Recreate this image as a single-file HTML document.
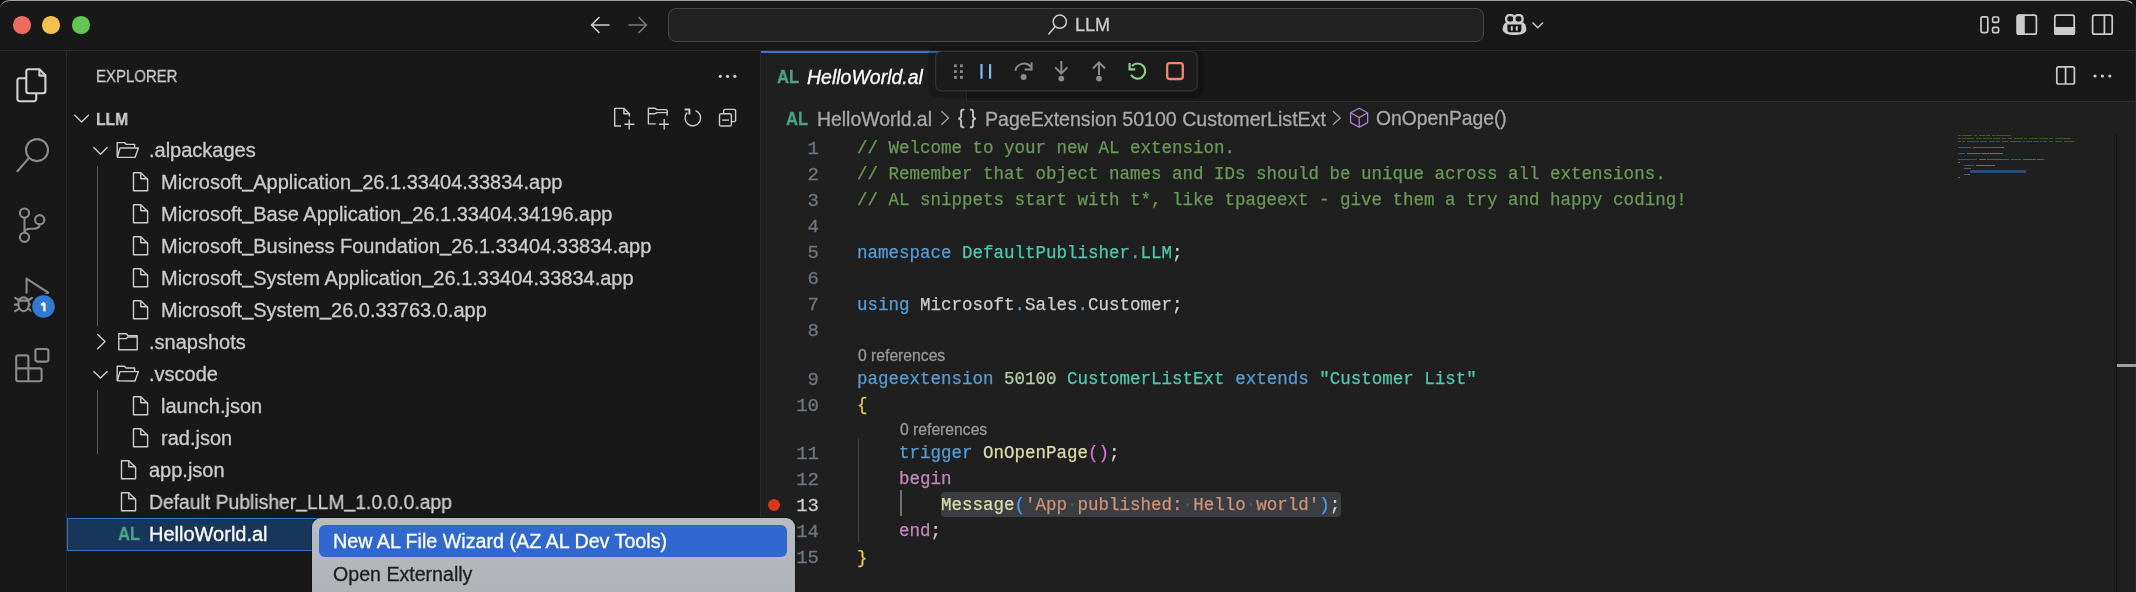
<!DOCTYPE html>
<html><head><meta charset="utf-8">
<style>
*{margin:0;padding:0;box-sizing:border-box}
html,body{width:2136px;height:592px;overflow:hidden;background:#0c0c0c}
body{font-family:"Liberation Sans",sans-serif;position:relative;-webkit-text-stroke-width:0.3px}
.a,.tr,.cl,.ln,.lens{will-change:transform}
.a{position:absolute;white-space:pre}
.ln{position:absolute;left:760px;width:59px;text-align:right;font-family:"Liberation Mono",monospace;font-size:19px;color:#6e7681;height:26px;line-height:26px}
.cl{-webkit-text-stroke-width:0.25px;position:absolute;left:857.45px;font-family:"Liberation Mono",monospace;font-size:17.5px;color:#cccccc;height:26px;line-height:26px;white-space:pre}
.cm{color:#6a9955}.kw{color:#569cd6}.ty{color:#4ec9b0}.nu{color:#b5cea8}.fn{color:#dcdcaa}.st{color:#ce9178}.ct{color:#c586c0}.b1{color:#f2c744}.b2{color:#da70d6}.b3{color:#4a9ff0}
.ws{color:#5a5a5a}
.us{position:relative;top:-2px}
.lens{position:absolute;font-size:15.7px;color:#999999;height:22px;line-height:22px;white-space:pre}
.tr{position:absolute;font-size:20px;color:#cccccc;height:32px;line-height:32px;white-space:pre}
svg.ov{position:absolute;left:0;top:0;width:2136px;height:592px;overflow:visible}
</style></head><body>
<div class="a" style="left:-1px;top:0;width:2137px;height:620px;background:#181818;border-radius:11px 11px 0 0;border-top:1.5px solid #a0a0a0;border-right:1px solid #2c2c2c;overflow:hidden"></div>
<div class="a" style="left:0;top:50px;width:2136px;height:1px;background:#2b2b2b"></div>
<div class="a" style="left:66px;top:51px;width:1px;height:541px;background:#2b2b2b"></div>
<div class="a" style="left:760px;top:51px;width:1px;height:541px;background:#2b2b2b"></div>
<div class="a" style="left:761px;top:51px;width:1375px;height:541px;background:#1f1f1f"></div>
<div class="a" style="left:966px;top:51px;width:1170px;height:51px;background:#181818;border-bottom:1px solid #2b2b2b;border-left:1px solid #2b2b2b"></div>
<div class="a" style="left:761px;top:51px;width:205px;height:1.6px;background:#2f76d0"></div>
<div class="a" style="left:2135px;top:10px;width:1px;height:582px;background:#2a2a2a"></div>
<div class="a" style="left:13px;top:15.5px;width:17.5px;height:17.5px;border-radius:50%;background:#ec6a5e"></div>
<div class="a" style="left:42px;top:15.5px;width:17.5px;height:17.5px;border-radius:50%;background:#f4bf4f"></div>
<div class="a" style="left:71.5px;top:15.5px;width:17.5px;height:17.5px;border-radius:50%;background:#61c554"></div>
<div class="a" style="left:668px;top:8px;width:816px;height:34px;border-radius:8px;background:#222222;border:1.5px solid #454545"></div>
<div class="a" style="left:1075px;top:14px;font-size:18px;line-height:22px;color:#cccccc">LLM</div>
<div class="a" style="left:941px;top:491.5px;width:400px;height:25px;border-radius:4px;background:#3a3d41"></div>
<div class="a" style="left:857.5px;top:438px;width:1px;height:104.4px;background:#404040"></div>
<div class="a" style="left:899.5px;top:490.2px;width:1.5px;height:26.1px;background:#707070"></div>
<div class="ln" style="top:135.5px;color:#6e7681">1</div>
<div class="cl" style="top:135.1px"><span class="cm">// Welcome to your new AL extension.</span></div>
<div class="ln" style="top:161.6px;color:#6e7681">2</div>
<div class="cl" style="top:161.2px"><span class="cm">// Remember that object names and IDs should be unique across all extensions.</span></div>
<div class="ln" style="top:187.7px;color:#6e7681">3</div>
<div class="cl" style="top:187.29999999999998px"><span class="cm">// AL snippets start with t*, like tpageext - give them a try and happy coding!</span></div>
<div class="ln" style="top:213.8px;color:#6e7681">4</div>
<div class="ln" style="top:239.9px;color:#6e7681">5</div>
<div class="cl" style="top:239.5px"><span class="kw">namespace</span> <span class="ty">DefaultPublisher</span><span class="kw">.</span><span class="ty">LLM</span>;</div>
<div class="ln" style="top:266.0px;color:#6e7681">6</div>
<div class="ln" style="top:292.1px;color:#6e7681">7</div>
<div class="cl" style="top:291.70000000000005px"><span class="kw">using</span> Microsoft<span class="kw">.</span>Sales<span class="kw">.</span>Customer;</div>
<div class="ln" style="top:318.2px;color:#6e7681">8</div>
<div class="ln" style="top:366.5px;color:#6e7681">9</div>
<div class="cl" style="top:366.1px"><span class="kw">pageextension</span> <span class="nu">50100</span> <span class="ty">CustomerListExt</span> <span class="kw">extends</span> <span class="ty">"Customer List"</span></div>
<div class="ln" style="top:392.6px;color:#6e7681">10</div>
<div class="cl" style="top:392.20000000000005px"><span class="b1">{</span></div>
<div class="ln" style="top:440.5px;color:#6e7681">11</div>
<div class="cl" style="top:440.1px">    <span class="kw">trigger</span> <span class="fn">OnOpenPage</span><span class="b2">()</span>;</div>
<div class="ln" style="top:466.6px;color:#6e7681">12</div>
<div class="cl" style="top:466.20000000000005px">    <span class="ct">begin</span></div>
<div class="ln" style="top:492.7px;color:#cccccc">13</div>
<div class="cl" style="top:492.3px">        <span class="fn">Message</span><span class="b3">(</span><span class="st">'App<span class="ws">·</span>published:<span class="ws">·</span>Hello<span class="ws">·</span>world'</span><span class="b3">)</span>;</div>
<div class="ln" style="top:518.8px;color:#6e7681">14</div>
<div class="cl" style="top:518.4px">    <span class="ct">end</span>;</div>
<div class="ln" style="top:544.9px;color:#6e7681">15</div>
<div class="cl" style="top:544.5px"><span class="b1">}</span></div>
<div class="lens" style="left:857.7px;top:344.5px">0 references</div>
<div class="lens" style="left:900px;top:418.5px">0 references</div>
<div class="a" style="left:767.8px;top:498.8px;width:12.4px;height:12.4px;border-radius:50%;background:#d9371f"></div>
<div class="a" style="left:96.3px;top:66px;font-size:17px;line-height:22px;color:#cccccc;transform:scaleX(0.88);transform-origin:0 0">EXPLORER</div>
<div class="a" style="left:96.3px;top:102.8px;font-size:17.4px;line-height:32px;color:#cccccc;font-weight:bold;transform:scaleX(0.9);transform-origin:0 0">LLM</div>
<div class="a" style="left:67px;top:517.5px;width:693px;height:32.5px;background:#16365a;border:1px solid #2f74c8"></div>
<div class="a" style="left:96.5px;top:166px;width:1px;height:160px;background:#585858"></div>
<div class="a" style="left:96.5px;top:390px;width:1px;height:64px;background:#585858"></div>
<div class="tr" style="left:149px;top:133.8px">.alpackages</div>
<div class="tr" style="left:160.5px;top:165.8px">Microsoft<span class="us">_</span>Application<span class="us">_</span>26.1.33404.33834.app</div>
<div class="tr" style="left:160.5px;top:197.8px">Microsoft<span class="us">_</span>Base Application<span class="us">_</span>26.1.33404.34196.app</div>
<div class="tr" style="left:160.5px;top:229.8px">Microsoft<span class="us">_</span>Business Foundation<span class="us">_</span>26.1.33404.33834.app</div>
<div class="tr" style="left:160.5px;top:261.8px">Microsoft<span class="us">_</span>System Application<span class="us">_</span>26.1.33404.33834.app</div>
<div class="tr" style="left:160.5px;top:293.8px">Microsoft<span class="us">_</span>System<span class="us">_</span>26.0.33763.0.app</div>
<div class="tr" style="left:149px;top:325.8px">.snapshots</div>
<div class="tr" style="left:149px;top:357.8px">.vscode</div>
<div class="tr" style="left:160.5px;top:389.8px">launch.json</div>
<div class="tr" style="left:160.5px;top:421.8px">rad.json</div>
<div class="tr" style="left:148.5px;top:453.8px">app.json</div>
<div class="tr" style="left:148.5px;top:485.8px;transform:scaleX(0.966);transform-origin:0 0">Default Publisher<span class="us">_</span>LLM<span class="us">_</span>1.0.0.0.app</div>
<div class="tr" style="left:148.5px;top:517.8px;color:#ffffff">HelloWorld.al</div>
<svg class="ov" width="2136" height="592" viewBox="0 0 2136 592"><g fill="none" stroke="#cccccc" stroke-width="1.6" stroke-linecap="round" stroke-linejoin="round"><path d="M591.5 25H609M599 17.5L591.5 25L599 32.5"/></g><g fill="none" stroke="#7a7a7a" stroke-width="1.6" stroke-linecap="round" stroke-linejoin="round"><path d="M629 25H646.5M639 17.5L646.5 25L639 32.5"/></g><g fill="none" stroke="#cccccc" stroke-width="1.5" stroke-linecap="round"><circle cx="1059.8" cy="21.7" r="6.6"/><path d="M1055 26.8L1048.8 33.9"/></g><g><path fill="#cccccc" d="M1505.6 22.5C1503.4 24.2 1502.7 26.8 1502.7 29.2C1502.7 33.2 1508 35.1 1514.5 35.1C1521 35.1 1526.3 33.2 1526.3 29.2C1526.3 26.8 1525.6 24.2 1523.4 22.5Z"/><path fill="#181818" d="M1507.4 24.6H1521.4V29.4a2.8 2.8 0 0 1 -2.8 2.8H1510.2a2.8 2.8 0 0 1 -2.8 -2.8z"/><rect x="1506.15" y="15.15" width="8.2" height="7.6" rx="3.2" fill="#181818" stroke="#cccccc" stroke-width="2.3"/><rect x="1514.35" y="15.15" width="8.2" height="7.6" rx="3.2" fill="#181818" stroke="#cccccc" stroke-width="2.3"/><rect x="1510.8" y="26" width="2" height="4.7" rx="1" fill="#cccccc"/><rect x="1515.8" y="26" width="2" height="4.7" rx="1" fill="#cccccc"/></g><path d="M1532.5 22.5L1537.8 27.8L1543 22.5" fill="none" stroke="#cccccc" stroke-width="1.4"/><g fill="none" stroke="#cccccc" stroke-width="1.7"><rect x="1981" y="16.8" width="6.8" height="15.8" rx="1.6"/><rect x="1992.6" y="17" width="6" height="5.4" rx="1.4"/><rect x="1992.6" y="27.3" width="6" height="5.4" rx="1.4"/><rect x="2017.4" y="15.2" width="19" height="19" rx="2"/><rect x="2054.8" y="15.2" width="19.4" height="19" rx="2"/><rect x="2092.6" y="15.2" width="19.6" height="19" rx="2"/><path d="M2104.4 15.2V34.2"/></g><path fill="#cccccc" d="M2019 14.4h5.8v20.6h-5.8a2.6 2.6 0 0 1 -2.6 -2.6v-15.4a2.6 2.6 0 0 1 2.6 -2.6z"/><path fill="#cccccc" d="M2054 27h21.2v5.4a2.6 2.6 0 0 1 -2.6 2.6h-16a2.6 2.6 0 0 1 -2.6 -2.6z"/><g fill="none" stroke="#cccccc" stroke-width="1.7"><rect x="2056.8" y="66.8" width="17.6" height="17.2" rx="1.8"/><path d="M2065.6 66.8V84"/></g><g fill="#cccccc"><circle cx="2095" cy="76" r="1.6"/><circle cx="2102.4" cy="76" r="1.6"/><circle cx="2109.8" cy="76" r="1.6"/></g><g fill="#cccccc"><circle cx="720.3" cy="76.3" r="1.6"/><circle cx="727.5" cy="76.3" r="1.6"/><circle cx="734.9" cy="76.3" r="1.6"/></g><g fill="none" stroke="#d2d2d2" stroke-width="2.1" stroke-linejoin="round"><path d="M26.3 91V71.5a2.2 2.2 0 0 1 2.2-2.2H39.4L45.4 75.3V91a2.2 2.2 0 0 1 -2.2 2.2H28.5a2.2 2.2 0 0 1 -2.2 -2.2z"/><path d="M39.4 69.3V75.6H45.4"/><path d="M26.3 78.3H19.6a2.2 2.2 0 0 0 -2.2 2.2V99a2.2 2.2 0 0 0 2.2 2.2H34a2.2 2.2 0 0 0 2.2 -2.2V93.2"/></g><g fill="none" stroke="#8b8b8b" stroke-width="2.1" stroke-linecap="round"><circle cx="37" cy="150.1" r="11"/><path d="M28.6 158.4L17.4 171.2"/></g><g fill="none" stroke="#8b8b8b" stroke-width="2.1"><circle cx="24.5" cy="213.1" r="4.6"/><circle cx="24.5" cy="237.3" r="4.6"/><circle cx="39.7" cy="219.7" r="4.6"/><path d="M24.5 217.7V232.7"/><path d="M39.7 224.3C39.7 228 37 228.8 33 228.8H30.5C27 228.8 24.5 230 24.5 233"/></g><g fill="none" stroke="#8b8b8b" stroke-width="2.1" stroke-linejoin="round" stroke-linecap="round"><path d="M26.6 292.8V278.6L48.2 292.6L43 296"/><ellipse cx="23.6" cy="304.2" rx="5.3" ry="7"/><path d="M18.5 300.6H28.7M14.8 304.6H18.3M28.9 304.6H32.4M15.2 297.8L18.6 300M32 297.8L28.6 300M15.2 311.2L18.8 308.8M32 311.2L28.4 308.8"/></g><circle cx="43.5" cy="306.5" r="13" fill="#181818"/><circle cx="43.5" cy="306.5" r="11.3" fill="#2f7bd4"/><path d="M44.4 302.8V311.2M41.2 305L44.4 302.8" fill="none" stroke="#ffffff" stroke-width="2.3" stroke-linejoin="round"/><g fill="none" stroke="#8b8b8b" stroke-width="2.1" stroke-linejoin="round"><path d="M18.2 355.4H26.4a2 2 0 0 1 2 2V368.4H39.6a2 2 0 0 1 2 2V379.2a2 2 0 0 1 -2 2H18.2a2 2 0 0 1 -2 -2V357.4a2 2 0 0 1 2 -2z"/><path d="M16.2 368.4H28.4V381.2"/><rect x="35.4" y="349" width="13" height="12.6" rx="2"/></g><g fill="none" stroke="#cccccc" stroke-width="1.4" stroke-linejoin="round"><path d="M621 126H614.7V108.4H624L629.4 113.8V116.5"/><path d="M623.9 108.4V113.8H629.4"/><path d="M624.4 124.3H634.4M629.2 119.5V129.4"/><path d="M655.8 123.9H648.4V108.2H655L657 109.6H666a1.2 1.2 0 0 1 1.2 1.2V115.8"/><path d="M648.4 113.7H655L657 112.6H667.2"/><path d="M659.1 124.3H669M664.2 119.1V129.6"/><path d="M695.4 110.6A7.8 7.8 0 1 1 687.2 112.6"/><path d="M684.6 109.6H689.4V114.4" stroke-width="2"/><rect x="719.5" y="113.8" width="11.9" height="12.2" rx="1.6"/><path d="M723.6 113.8V111a1.6 1.6 0 0 1 1.6 -1.6H734a1.6 1.6 0 0 1 1.6 1.6V120a1.6 1.6 0 0 1 -1.6 1.6H731.4"/><path d="M722.2 120.1H729"/></g><g fill="none" stroke="#cccccc" stroke-width="1.4" stroke-linecap="round" stroke-linejoin="round"><path d="M74.8 115.2L81.6 122L88.4 115.2"/><path d="M93.8 147.6L100.5 154.3L107.2 147.6"/><path d="M97.6 334.4L105 341.6L97.6 348.8"/><path d="M93.8 371.4L100.5 378.1L107.2 371.4"/></g><g fill="none" stroke="#cccccc" stroke-width="1.4" stroke-linejoin="round"><path d="M117.2 156.8V142.6H124.4L126.2 144.4H134.6V147.6"/><path d="M117.4 157.2L120 148.0H138.4L135 157.4Z"/><path d="M117.2 380.4V366.2H124.4L126.2 368.0H134.6V371.2"/><path d="M117.4 380.79999999999995L120 371.6H138.4L135 381.0Z"/><path d="M133.5 172.7H140.8L147.60000000000002 179.5V190.8H133.5Z"/><path d="M140.8 172.7V178.8H147.60000000000002"/><path d="M133.5 204.7H140.8L147.60000000000002 211.5V222.8H133.5Z"/><path d="M140.8 204.7V210.8H147.60000000000002"/><path d="M133.5 236.7H140.8L147.60000000000002 243.5V254.8H133.5Z"/><path d="M140.8 236.7V242.8H147.60000000000002"/><path d="M133.5 268.7H140.8L147.60000000000002 275.5V286.8H133.5Z"/><path d="M140.8 268.7V274.8H147.60000000000002"/><path d="M133.5 300.7H140.8L147.60000000000002 307.5V318.8H133.5Z"/><path d="M140.8 300.7V306.8H147.60000000000002"/><path d="M133.5 396.7H140.8L147.60000000000002 403.5V414.8H133.5Z"/><path d="M140.8 396.7V402.8H147.60000000000002"/><path d="M133.5 428.7H140.8L147.60000000000002 435.5V446.8H133.5Z"/><path d="M140.8 428.7V434.8H147.60000000000002"/><path d="M121.5 460.7H128.8L135.6 467.5V478.8H121.5Z"/><path d="M128.8 460.7V466.8H135.6"/><path d="M121.5 492.7H128.8L135.6 499.5V510.8H121.5Z"/><path d="M128.8 492.7V498.8H135.6"/><path d="M118.8 333.8H126.2L128 335.8H137.2V349.8H118.8Z"/><path d="M118.8 338.6H126.2L128 337H137.2"/></g><rect x="928" y="46" width="276" height="52" rx="10" fill="#000" opacity="0.18"/><rect x="935.6" y="51.5" width="261.6" height="39.4" rx="6" fill="#1b1b1b" stroke="#333333" stroke-width="1.2"/><g fill="#8b8b8b"><rect x="954" y="64.4" width="2.8" height="2.8"/><rect x="960" y="64.4" width="2.8" height="2.8"/><rect x="954" y="70.2" width="2.8" height="2.8"/><rect x="960" y="70.2" width="2.8" height="2.8"/><rect x="954" y="76" width="2.8" height="2.8"/><rect x="960" y="76" width="2.8" height="2.8"/></g><g fill="#75beff"><rect x="980.4" y="64" width="2.2" height="14.8" rx="0.6"/><rect x="989" y="64" width="2.2" height="14.8" rx="0.6"/></g><g fill="none" stroke="#8b8b8b" stroke-width="2" stroke-linejoin="miter"><path d="M1015.3 70.8A9 9 0 0 1 1031 66.8"/><path d="M1031.6 62.2V69.6H1024.6"/><path d="M1061.3 61V73.5M1055.2 67.4L1061.3 73.5L1067.4 67.4"/><path d="M1099 75V62.4M1092.9 68.5L1099 62.4L1105.1 68.5"/></g><g fill="#8b8b8b"><circle cx="1023.6" cy="77" r="3"/><circle cx="1061.3" cy="78.6" r="2.9"/><circle cx="1099" cy="78.6" r="2.9"/></g><g fill="none" stroke="#89d185" stroke-width="2.2"><path d="M1131 74.8A7.6 7.6 0 1 0 1132 66"/><path d="M1129.6 63V69.3H1135.2"/></g><rect x="1167.2" y="63.2" width="15.6" height="15.8" rx="2.4" fill="none" stroke="#f0876f" stroke-width="2.3"/><g fill="none" stroke="#b180d7" stroke-width="1.3" stroke-linejoin="round"><path d="M1359.2 108.2L1367.6 112.8V122.6L1359.2 127.2L1350.6 122.6V112.8Z"/><path d="M1350.6 112.8L1359.2 117.6L1367.6 112.8M1359.2 117.6V127.2"/></g><g fill="none" stroke="#a0a0a0" stroke-width="1.3"><path d="M941.4 111.2L948.6 118L941.4 124.8"/><path d="M1333 111.2L1340.2 118L1333 124.8"/></g></svg>
<div class="a" style="left:777px;top:64px;font-size:18px;line-height:26px;color:#4fa48a;font-weight:bold;transform:scaleX(0.92);transform-origin:0 0">AL</div>
<div class="a" style="left:807px;top:63.5px;font-size:19.5px;line-height:26px;color:#ffffff;font-style:italic">HelloWorld.al</div>
<div class="a" style="left:785.5px;top:106px;font-size:18px;line-height:26px;color:#4fa48a;font-weight:bold;transform:scaleX(0.92);transform-origin:0 0">AL</div>
<div class="a" style="left:817px;top:106px;font-size:19.4px;line-height:26px;color:#a9a9a9">HelloWorld.al</div>
<div class="a" style="left:958px;top:105px;font-size:19.3px;line-height:26px;color:#c8c8c8">{ }</div>
<div class="a" style="left:984.5px;top:106px;font-size:19.6px;line-height:26px;color:#a9a9a9">PageExtension 50100 CustomerListExt</div>
<div class="a" style="left:1375.5px;top:106px;font-size:19.3px;line-height:26px;color:#a9a9a9">OnOpenPage()</div>
<div class="a" style="left:118px;top:521px;font-size:18px;line-height:26px;color:#4fa48a;font-weight:bold;transform:scaleX(0.92);transform-origin:0 0">AL</div>
<div class="a" style="left:1958.0px;top:134.5px;width:2.9px;height:1.4px;background:#6a9955;opacity:0.45"></div>
<div class="a" style="left:1962.4px;top:134.5px;width:10.3px;height:1.4px;background:#6a9955;opacity:0.45"></div>
<div class="a" style="left:1974.2px;top:134.5px;width:2.9px;height:1.4px;background:#6a9955;opacity:0.45"></div>
<div class="a" style="left:1978.6px;top:134.5px;width:5.9px;height:1.4px;background:#6a9955;opacity:0.45"></div>
<div class="a" style="left:1985.9px;top:134.5px;width:4.4px;height:1.4px;background:#6a9955;opacity:0.45"></div>
<div class="a" style="left:1991.8px;top:134.5px;width:2.9px;height:1.4px;background:#6a9955;opacity:0.45"></div>
<div class="a" style="left:1996.2px;top:134.5px;width:14.7px;height:1.4px;background:#6a9955;opacity:0.45"></div>
<div class="a" style="left:1958.0px;top:137.5px;width:2.9px;height:1.4px;background:#6a9955;opacity:0.45"></div>
<div class="a" style="left:1962.4px;top:137.5px;width:11.8px;height:1.4px;background:#6a9955;opacity:0.45"></div>
<div class="a" style="left:1975.6px;top:137.5px;width:5.9px;height:1.4px;background:#6a9955;opacity:0.45"></div>
<div class="a" style="left:1983.0px;top:137.5px;width:8.8px;height:1.4px;background:#6a9955;opacity:0.45"></div>
<div class="a" style="left:1993.3px;top:137.5px;width:7.3px;height:1.4px;background:#6a9955;opacity:0.45"></div>
<div class="a" style="left:2002.1px;top:137.5px;width:4.4px;height:1.4px;background:#6a9955;opacity:0.45"></div>
<div class="a" style="left:2008.0px;top:137.5px;width:4.4px;height:1.4px;background:#6a9955;opacity:0.45"></div>
<div class="a" style="left:2013.9px;top:137.5px;width:8.8px;height:1.4px;background:#6a9955;opacity:0.45"></div>
<div class="a" style="left:2024.2px;top:137.5px;width:2.9px;height:1.4px;background:#6a9955;opacity:0.45"></div>
<div class="a" style="left:2028.6px;top:137.5px;width:8.8px;height:1.4px;background:#6a9955;opacity:0.45"></div>
<div class="a" style="left:2038.8px;top:137.5px;width:8.8px;height:1.4px;background:#6a9955;opacity:0.45"></div>
<div class="a" style="left:2049.1px;top:137.5px;width:4.4px;height:1.4px;background:#6a9955;opacity:0.45"></div>
<div class="a" style="left:2055.0px;top:137.5px;width:16.2px;height:1.4px;background:#6a9955;opacity:0.45"></div>
<div class="a" style="left:1958.0px;top:140.5px;width:2.9px;height:1.4px;background:#6a9955;opacity:0.45"></div>
<div class="a" style="left:1962.4px;top:140.5px;width:2.9px;height:1.4px;background:#6a9955;opacity:0.45"></div>
<div class="a" style="left:1966.8px;top:140.5px;width:11.8px;height:1.4px;background:#6a9955;opacity:0.45"></div>
<div class="a" style="left:1980.0px;top:140.5px;width:7.3px;height:1.4px;background:#6a9955;opacity:0.45"></div>
<div class="a" style="left:1988.9px;top:140.5px;width:5.9px;height:1.4px;background:#6a9955;opacity:0.45"></div>
<div class="a" style="left:1996.2px;top:140.5px;width:4.4px;height:1.4px;background:#6a9955;opacity:0.45"></div>
<div class="a" style="left:2002.1px;top:140.5px;width:5.9px;height:1.4px;background:#6a9955;opacity:0.45"></div>
<div class="a" style="left:2009.5px;top:140.5px;width:11.8px;height:1.4px;background:#6a9955;opacity:0.45"></div>
<div class="a" style="left:2022.7px;top:140.5px;width:1.5px;height:1.4px;background:#6a9955;opacity:0.45"></div>
<div class="a" style="left:2025.6px;top:140.5px;width:5.9px;height:1.4px;background:#6a9955;opacity:0.45"></div>
<div class="a" style="left:2033.0px;top:140.5px;width:5.9px;height:1.4px;background:#6a9955;opacity:0.45"></div>
<div class="a" style="left:2040.3px;top:140.5px;width:1.5px;height:1.4px;background:#6a9955;opacity:0.45"></div>
<div class="a" style="left:2043.3px;top:140.5px;width:4.4px;height:1.4px;background:#6a9955;opacity:0.45"></div>
<div class="a" style="left:2049.1px;top:140.5px;width:4.4px;height:1.4px;background:#6a9955;opacity:0.45"></div>
<div class="a" style="left:2055.0px;top:140.5px;width:7.3px;height:1.4px;background:#6a9955;opacity:0.45"></div>
<div class="a" style="left:2063.8px;top:140.5px;width:10.3px;height:1.4px;background:#6a9955;opacity:0.45"></div>
<div class="a" style="left:1958.0px;top:146.5px;width:13.2px;height:1.4px;background:#569cd6;opacity:0.45"></div>
<div class="a" style="left:1972.7px;top:146.5px;width:23.5px;height:1.4px;background:#4ec9b0;opacity:0.45"></div>
<div class="a" style="left:1996.2px;top:146.5px;width:1.5px;height:1.4px;background:#569cd6;opacity:0.45"></div>
<div class="a" style="left:1997.7px;top:146.5px;width:4.4px;height:1.4px;background:#4ec9b0;opacity:0.45"></div>
<div class="a" style="left:2002.1px;top:146.5px;width:1.5px;height:1.4px;background:#cccccc;opacity:0.45"></div>
<div class="a" style="left:1958.0px;top:152.5px;width:7.3px;height:1.4px;background:#569cd6;opacity:0.45"></div>
<div class="a" style="left:1966.8px;top:152.5px;width:13.2px;height:1.4px;background:#cccccc;opacity:0.45"></div>
<div class="a" style="left:1980.0px;top:152.5px;width:1.5px;height:1.4px;background:#569cd6;opacity:0.45"></div>
<div class="a" style="left:1981.5px;top:152.5px;width:7.3px;height:1.4px;background:#cccccc;opacity:0.45"></div>
<div class="a" style="left:1988.9px;top:152.5px;width:1.5px;height:1.4px;background:#569cd6;opacity:0.45"></div>
<div class="a" style="left:1990.3px;top:152.5px;width:13.2px;height:1.4px;background:#cccccc;opacity:0.45"></div>
<div class="a" style="left:1958.0px;top:158.5px;width:19.1px;height:1.4px;background:#569cd6;opacity:0.45"></div>
<div class="a" style="left:1978.6px;top:158.5px;width:7.3px;height:1.4px;background:#b5cea8;opacity:0.45"></div>
<div class="a" style="left:1987.4px;top:158.5px;width:22.1px;height:1.4px;background:#4ec9b0;opacity:0.45"></div>
<div class="a" style="left:2010.9px;top:158.5px;width:10.3px;height:1.4px;background:#569cd6;opacity:0.45"></div>
<div class="a" style="left:2022.7px;top:158.5px;width:13.2px;height:1.4px;background:#4ec9b0;opacity:0.45"></div>
<div class="a" style="left:2037.4px;top:158.5px;width:7.3px;height:1.4px;background:#4ec9b0;opacity:0.45"></div>
<div class="a" style="left:1958.0px;top:161.5px;width:1.5px;height:1.4px;background:#ffd700;opacity:0.45"></div>
<div class="a" style="left:1963.9px;top:164.5px;width:10.3px;height:1.4px;background:#569cd6;opacity:0.45"></div>
<div class="a" style="left:1975.6px;top:164.5px;width:14.7px;height:1.4px;background:#dcdcaa;opacity:0.45"></div>
<div class="a" style="left:1990.3px;top:164.5px;width:2.9px;height:1.4px;background:#da70d6;opacity:0.45"></div>
<div class="a" style="left:1993.3px;top:164.5px;width:1.5px;height:1.4px;background:#cccccc;opacity:0.45"></div>
<div class="a" style="left:1963.9px;top:167.5px;width:7.3px;height:1.4px;background:#c586c0;opacity:0.45"></div>
<div class="a" style="left:1969.8px;top:170.5px;width:10.3px;height:1.4px;background:#dcdcaa;opacity:0.45"></div>
<div class="a" style="left:1980.0px;top:170.5px;width:1.5px;height:1.4px;background:#179fff;opacity:0.45"></div>
<div class="a" style="left:1981.5px;top:170.5px;width:5.9px;height:1.4px;background:#ce9178;opacity:0.45"></div>
<div class="a" style="left:1988.9px;top:170.5px;width:14.7px;height:1.4px;background:#ce9178;opacity:0.45"></div>
<div class="a" style="left:2005.0px;top:170.5px;width:7.3px;height:1.4px;background:#ce9178;opacity:0.45"></div>
<div class="a" style="left:2013.9px;top:170.5px;width:8.8px;height:1.4px;background:#ce9178;opacity:0.45"></div>
<div class="a" style="left:2022.7px;top:170.5px;width:1.5px;height:1.4px;background:#179fff;opacity:0.45"></div>
<div class="a" style="left:2024.2px;top:170.5px;width:1.5px;height:1.4px;background:#cccccc;opacity:0.45"></div>
<div class="a" style="left:1963.9px;top:173.5px;width:4.4px;height:1.4px;background:#c586c0;opacity:0.45"></div>
<div class="a" style="left:1968.3px;top:173.5px;width:1.5px;height:1.4px;background:#cccccc;opacity:0.45"></div>
<div class="a" style="left:1958.0px;top:176.5px;width:1.5px;height:1.4px;background:#ffd700;opacity:0.45"></div>
<div class="a" style="left:1969.6px;top:170px;width:56px;height:3px;background:#264f78;opacity:0.9"></div>
<div class="a" style="left:2115.5px;top:134px;width:1px;height:458px;background:#111111"></div>
<div class="a" style="left:2116.5px;top:364px;width:20px;height:3px;background:#a0a0a0"></div>
<div class="a" style="left:311.5px;top:518px;width:483px;height:90px;border-radius:9px;background:linear-gradient(#b8bbbf,#aeb1b5);box-shadow:0 0 0 0.5px rgba(0,0,0,0.5)"></div>
<div class="a" style="left:318.6px;top:525px;width:468.4px;height:31.6px;border-radius:6px;background:#3068cf"></div>
<div class="a" style="left:332.5px;top:528.3px;font-size:19.7px;line-height:26px;color:#ffffff">New AL File Wizard (AZ AL Dev Tools)</div>
<div class="a" style="left:332.5px;top:560.8px;font-size:19.6px;line-height:26px;color:#1d1d1d">Open Externally</div>
</body></html>
